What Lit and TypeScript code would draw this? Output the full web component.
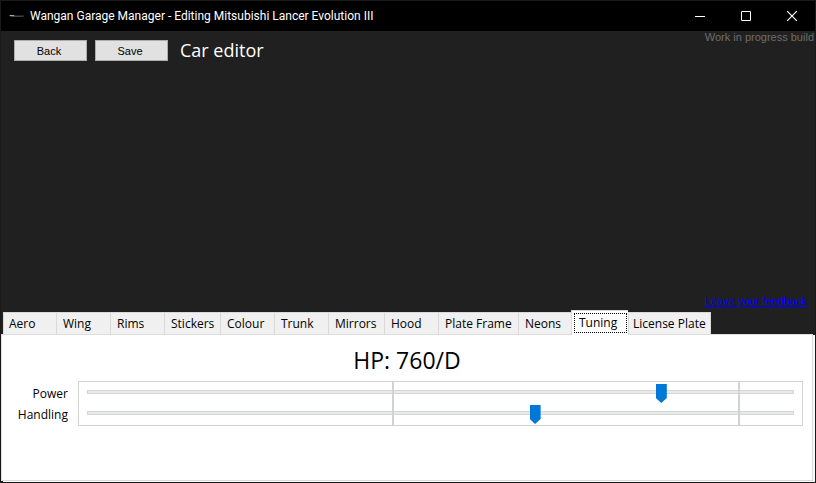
import { LitElement, html, css } from "lit";
import { customElement, state } from "lit/decorators.js";
import { classMap } from "lit/directives/class-map.js";

const TABS = [
  "Aero", "Wing", "Rims", "Stickers", "Colour", "Trunk",
  "Mirrors", "Hood", "Plate Frame", "Neons", "Tuning", "License Plate",
];

@customElement("app-root")
export class AppRoot extends LitElement {
  @state() private selected = "Tuning";

  static styles = css`
    :host {
      display: flex;
      flex-direction: column;
      box-sizing: border-box;
      height: 100vh;
      border: 1px solid #1a1a1a;
      background: #202020;
      color: #fff;
      font-family: "Open Sans", "Noto Sans", sans-serif;
      font-size: 12px;
      line-height: 16px;
    }
    * { box-sizing: border-box; }
    button { font: inherit; color: inherit; margin: 0; }
    .titlebar {
      display: flex;
      align-items: center;
      height: 30px;
      flex: none;
      background: #000;
      padding-left: 8px;
    }
    .appicon { width: 16px; height: 16px; margin-right: 5px; }
    .title { flex: 1; margin: 0; font-family: Roboto, sans-serif; font-size: 12px; font-weight: 400; white-space: nowrap; }
    .winbtn {
      width: 46px;
      height: 30px;
      padding: 0;
      border: 0;
      background: none;
      display: grid;
      place-items: center;
    }
    .winbtn svg { fill: none; stroke: #fff; }
    .header { display: flex; align-items: flex-start; padding-left: 13px; gap: 8px; }
    .push {
      width: 73px;
      height: 21px;
      margin-top: 9px;
      padding: 0 3px 0 0;
      border: 1px solid #adadad;
      background: #e1e1e1;
      color: #000;
      line-height: 18px;
    }
    .push, .build, .feedback { font-family: "Liberation Sans", sans-serif; font-size: 11px; }
    .heading { margin: 7px 0 0 4px; font-size: 18px; line-height: 24px; font-weight: 400; }
    .build, .feedback { line-height: 12px; }
    .build { margin: 0 0 0 auto; color: #6d6d6d; padding-right: 1px; }
    .stage { flex: 1; display: flex; justify-content: flex-end; align-items: flex-end; padding: 0 8px 3px; }
    .feedback { color: #00f; }
    .tabs {
      display: grid;
      grid-template-columns: 53px 54px 54px 56px 54px 54px 56px 54px 80px 53px 57px 83px;
      align-items: end;
      padding-left: 2px;
      color: #000;
    }
    .tab {
      height: 22px;
      padding: 0 0 0 6px;
      border: 1px solid #d9d9d9;
      border-width: 1px 0 0 1px;
      background: #f0f0f0;
      text-align: left;
      white-space: nowrap;
      line-height: 20px;
    }
    .tab:first-child { padding-left: 5px; }
    .tab:last-child { border-right-width: 1px; padding-left: 4px; }
    .tab.selected {
      height: 25px;
      margin-bottom: -1px;
      padding: 2px 1px 2px 2px;
      background: #fff;
      position: relative;
    }
    .tab.selected .caption { display: block; height: 20px; line-height: 18px; padding-left: 4px; border: 1px dotted #000; }
    .page {
      color: #000;
      min-height: 147px;
      background: #fff;
      border: 1px solid #dcdcdc;
      box-shadow: 2px 1px 0 #f9f9f9;
      margin: 0 2px 1px 0;
      padding-top: 9px;
    }
    .power { margin: 0; text-align: center; font-size: 23px; line-height: 32px; font-weight: 400; }
    .tuning { display: grid; grid-template-columns: 66px 1fr; column-gap: 10px; margin: 5px 9px 0 0; }
    .labels { display: grid; grid-auto-rows: 21px; padding-top: 2px; text-align: right; line-height: 21px; }
    .sliders {
      position: relative;
      display: grid;
      grid-auto-rows: 20px;
      row-gap: 1px;
      border: 1px solid #d2d2d2;
      padding: 0 8px 2px;
    }
    .marks { position: absolute; inset: 0; display: grid; grid-template-columns: 315fr 346fr 62fr; pointer-events: none; }
    .mark { border-right: 2px solid #d2d2d2; }
    .slider {
      appearance: none;
      width: 100%;
      height: 20px;
      margin: 0;
      background: none;
    }
    .slider::-webkit-slider-runnable-track {
      height: 4px;
      border: 1px solid #d6d6d6;
      background: #e7eaea;
    }
    .slider::-webkit-slider-thumb {
      appearance: none;
      width: 11px;
      height: 19px;
      margin-top: -7px;
      background: #0078d7;
      clip-path: polygon(0 0, 100% 0, 100% 14px, 50% 100%, 0 14px);
    }
  `;

  render() {
    return html`
      <header class="titlebar">
        <svg class="appicon" viewBox="0 0 16 16" aria-hidden="true">
          <path d="M0 7h5l2 .5h8V8.5l-3 .5H3L0 8z" fill="#444" />
          <path d="M1 7h4v1H1z" fill="#aaa" />
        </svg>
        <h1 class="title">Wangan Garage Manager - Editing Mitsubishi Lancer Evolution III</h1>
        <button class="winbtn" aria-label="Minimize">
          <svg width="10" height="10"><path d="M0 5.5h10" /></svg>
        </button>
        <button class="winbtn" aria-label="Maximize">
          <svg width="10" height="10"><path d="M.5.5h9v9h-9z" /></svg>
        </button>
        <button class="winbtn" aria-label="Close">
          <svg width="10" height="10"><path d="M0 0l10 10M10 0L0 10" stroke-width="1.2" /></svg>
        </button>
      </header>
      <div class="header">
        <button class="push">Back</button>
        <button class="push">Save</button>
        <h2 class="heading">Car editor</h2>
        <p class="build">Work in progress build</p>
      </div>
      <main class="stage"><a class="feedback" href="#feedback">Leave your feedback</a></main>
      <nav class="tabs" role="tablist">
        ${TABS.map((name) => html`
          <button
            role="tab"
            class=${classMap({ tab: true, selected: name === this.selected })}
            aria-selected=${name === this.selected}
            @click=${() => (this.selected = name)}
          ><span class="caption">${name}</span></button>`)}
      </nav>
      <section class="page" role="tabpanel" aria-label=${this.selected}>
        <h3 class="power">HP: 760/D</h3>
        <div class="tuning">
          <div class="labels">
            <label for="power">Power</label>
            <label for="handling">Handling</label>
          </div>
          <div class="sliders">
            <input class="slider" id="power" type="range" min="0" max="22" .value=${"18"} />
            <input class="slider" id="handling" type="range" min="0" max="22" .value=${"14"} />
            <div class="marks"><span class="mark"></span><span class="mark"></span></div>
          </div>
        </div>
      </section>
    `;
  }
}
